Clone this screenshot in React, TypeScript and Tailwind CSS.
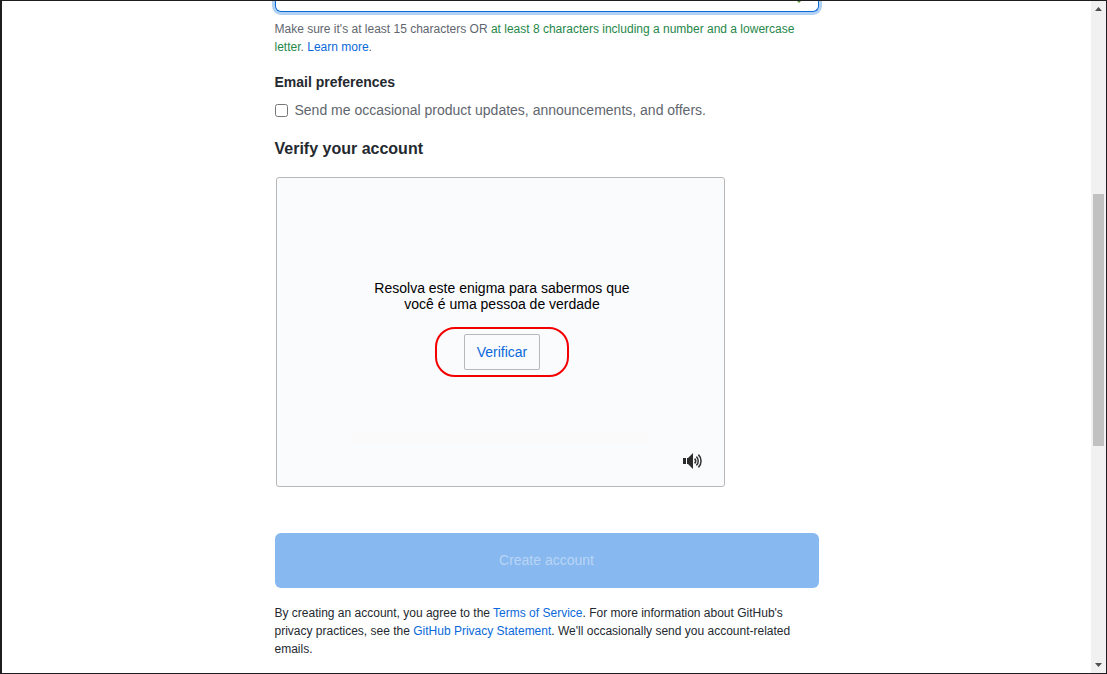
import React from "react";

const linkClass = "text-[#0969da] hover:underline";

function PasswordField() {
  return (
    <div>
      <div className="relative">
        <input
          type="password"
          aria-label="Password"
          aria-describedby="password-hint"
          className="block h-[11px] w-full rounded-b-md border border-t-0 border-[#0969da] bg-white px-3 shadow-[0_0_0_3px_#b1d1f3] outline-none"
        />
        <svg aria-hidden="true" viewBox="0 0 4 2" className="absolute top-0 right-[18px] h-[2px] w-1">
          <path d="M0 0h4L2 2z" fill="#57993d" />
        </svg>
      </div>
      <p id="password-hint" className="mt-2 text-xs leading-[18px] text-[#5f666e]">
        Make sure it's at least 15 characters OR{" "}
        <span className="text-[#26874a]">
          at least 8 characters including a number and a lowercase letter
        </span>
        .{" "}
        <a href="#password-help" className={linkClass}>
          Learn more
        </a>
        .
      </p>
    </div>
  );
}

function SpeakerIcon() {
  return (
    <svg aria-hidden="true" viewBox="0 0 20 16" className="h-4 w-5" fill="none">
      <path d="M0 5h3v6H0z M4 5h1l5-5v16l-5-5H4z" fill="#2b2b2b" />
      <path
        d="M11.6 5.6a3.4 3.4 0 0 1 0 4.8M13.4 3.6a6.2 6.2 0 0 1 0 8.8M15.4 1.6a9 9 0 0 1 0 12.8"
        stroke="#333"
        strokeWidth="1.5"
      />
    </svg>
  );
}

function Puzzle() {
  return (
    <section
      aria-label="Resolva este enigma"
      className="mx-px mt-4 flex h-[310px] max-w-[449px] flex-col items-center rounded-[3px] border border-[#b8b8b8] bg-[#fafbfd] pl-1"
    >
      <p className="mt-[102px] w-[270px] text-center text-sm leading-4 text-black">
        Resolva este enigma para sabermos que você é uma pessoa de verdade
      </p>
      <div className="mt-[15px] rounded-[20px] border-2 border-[#f30000] px-[27px] py-[5px]">
        <button
          type="button"
          className="block h-9 w-[76px] rounded-xs border border-[#b8b8b8] bg-[#fafbfd] text-sm text-[#0969da]"
        >
          Verificar
        </button>
      </div>
      <div className="mt-[54px] mr-1 h-[14px] w-[298px] bg-[#fafafa]" />
      <button type="button" aria-label="Áudio" className="mt-2 mr-[21px] self-end">
        <SpeakerIcon />
      </button>
    </section>
  );
}

function Scrollbar() {
  return (
    <div aria-hidden="true" className="flex w-[15px] shrink-0 flex-col items-center bg-[#f1f1f1]">
      <svg viewBox="0 0 15 15" className="h-[15px] w-[15px]">
        <path d="M4 10L7.5 6L11 10z" fill="#505050" />
      </svg>
      <div className="grow-[178]" />
      <div className="w-[11px] grow-[252] bg-[#c1c1c1]" />
      <div className="grow-[212]" />
      <svg viewBox="0 0 15 15" className="h-[15px] w-[15px]">
        <path d="M4 5L7.5 9L11 5z" fill="#505050" />
      </svg>
    </div>
  );
}

export default function App() {
  return (
    <div className="flex min-h-screen overflow-hidden border border-l-2 border-[#1f1d20] bg-white font-['Liberation_Sans',Arial,sans-serif] text-[#24292f]">
      <main className="min-w-0 flex-1">
        <form className="mx-auto max-w-[544px]" onSubmit={(e) => e.preventDefault()}>
          <PasswordField />
          <fieldset className="mt-4">
            <legend className="text-sm font-bold leading-5">Email preferences</legend>
            <label className="mt-2 flex items-center text-sm leading-5 text-[#5f666e]">
              <input type="checkbox" className="mr-[7px] h-[13px] w-[13px]" />
              Send me occasional product updates, announcements, and offers.
            </label>
          </fieldset>
          <h2 className="mt-[17px] text-base font-bold leading-6">Verify your account</h2>
          <Puzzle />
          <button
            type="submit"
            disabled
            className="mt-[46px] block h-[55px] w-full rounded-md bg-[#88b8f0] pb-0.5 text-sm text-[#b8d5f6]"
          >
            Create account
          </button>
          <p className="mt-4 text-xs leading-[18px]">
            By creating an account, you agree to the{" "}
            <a href="#terms" className={linkClass}>
              Terms of Service
            </a>
            . For more information about GitHub's privacy practices, see the{" "}
            <a href="#privacy" className={linkClass}>
              GitHub Privacy Statement
            </a>
            . We'll occasionally send you account-related emails.
          </p>
        </form>
      </main>
      <Scrollbar />
    </div>
  );
}
